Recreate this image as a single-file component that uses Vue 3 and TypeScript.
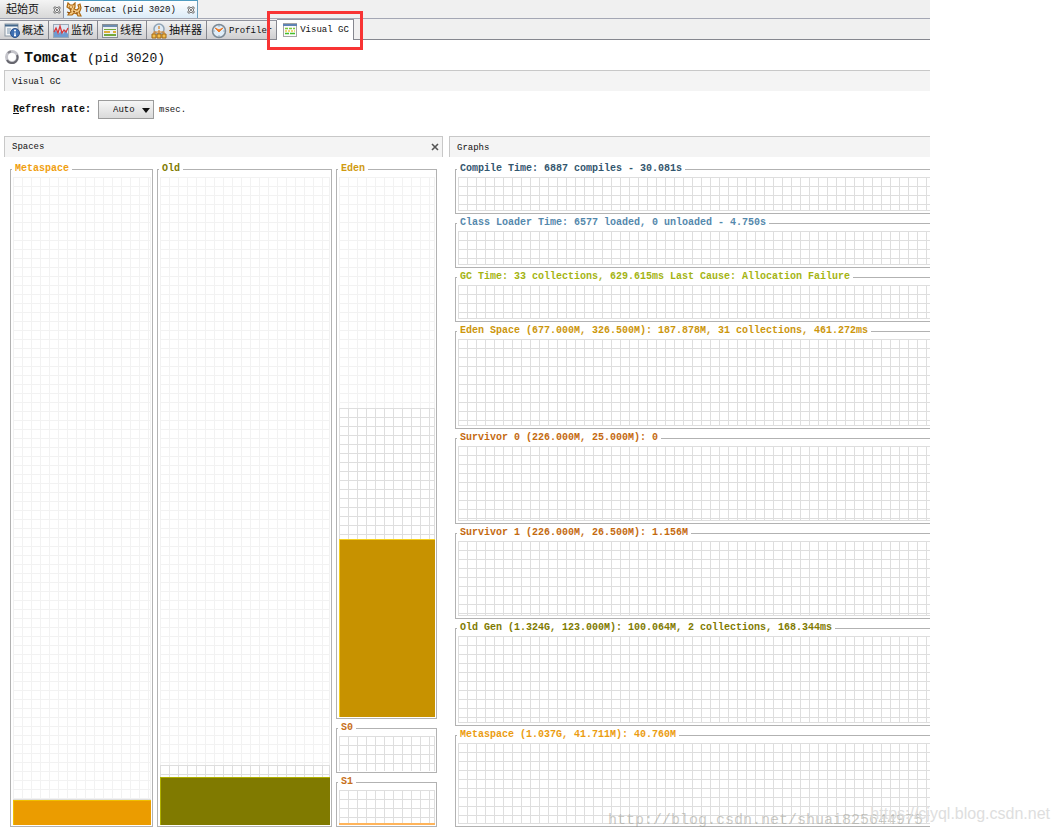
<script setup lang="ts">
interface Space {
  name: string
  color: string
  fill: string
  edge: string
  used: number
  committed: number
}

interface Graph {
  title: string
  color: string
  size: string
}

const metaspace: Space = { name: 'Metaspace', color: '#f0a010', fill: '#eb9c00', edge: '#f0c000', used: 3.7, committed: 3.8 }
const old: Space = { name: 'Old', color: '#807a00', fill: '#807a00', edge: '#b0b000', used: 7.3, committed: 9.1 }
const young: Space[] = [
  { name: 'Eden', color: '#d09a10', fill: '#c79200', edge: '#f5d020', used: 32.8, committed: 57.2 },
  { name: 'S0', color: '#c8701a', fill: '#ffb45a', edge: '#ffb45a', used: 0, committed: 100 },
  { name: 'S1', color: '#c8701a', fill: '#ffb45a', edge: '#ffb45a', used: 3, committed: 100 },
]
const columns: Space[][] = [[metaspace], [old], young]

const graphs: Graph[] = [
  { title: 'Compile Time: 6887 compiles - 30.081s', color: '#33566e', size: 'small' },
  { title: 'Class Loader Time: 6577 loaded, 0 unloaded - 4.750s', color: '#5488ac', size: 'small' },
  { title: 'GC Time: 33 collections, 629.615ms Last Cause: Allocation Failure', color: '#a4b412', size: 'small' },
  { title: 'Eden Space (677.000M, 326.500M): 187.878M, 31 collections, 461.272ms', color: '#cc960c', size: 'large' },
  { title: 'Survivor 0 (226.000M, 25.000M): 0', color: '#c46a10', size: 'medium' },
  { title: 'Survivor 1 (226.000M, 26.500M): 1.156M', color: '#c46a10', size: 'medium' },
  { title: 'Old Gen (1.324G, 123.000M): 100.064M, 2 collections, 168.344ms', color: '#807a00', size: 'large' },
  { title: 'Metaspace (1.037G, 41.711M): 40.760M', color: '#eb9c10', size: 'fill' },
]
</script>

<template>
  <main class="page">
    <nav class="docs" aria-label="Documents">
      <div class="doc">
        <button class="doc-name" type="button">起始页</button>
        <button class="x" type="button" aria-label="Close start page">
          <svg viewBox="0 0 8 8"><path d="M1 1h2l1 1 1-1h2v2L6 4l1 1v2H5L4 6 3 7H1V5l1-1-1-1z" fill="#eee" stroke="#777" /><path d="M2 2l4 4M6 2L2 6" stroke="#888" /></svg>
        </button>
      </div>
      <div class="doc current">
        <button class="doc-name" type="button">
          <svg class="icon" viewBox="0 0 16 16">
            <path d="M2 1l2 2h3l2-2v4l-1 2 3 1 2-2-1-3 2-1 1 4-1 3-1 1 2 4h-3l-1-2-3-1-2 2H2l1-2 2-1-1-3-3-2z" fill="#f6cd88" stroke="#b06a12" stroke-width="1.200" />
            <path d="M3 5h1M6 5h1M4 7h2M7 9l2 1M11 10v2M1 10l3 1" fill="none" stroke="#8a4a08" stroke-width="1.200" />
          </svg>
          Tomcat (pid 3020)
        </button>
        <button class="x" type="button" aria-label="Close Tomcat">
          <svg viewBox="0 0 8 8"><path d="M1 1h2l1 1 1-1h2v2L6 4l1 1v2H5L4 6 3 7H1V5l1-1-1-1z" fill="#eee" stroke="#777" /><path d="M2 2l4 4M6 2L2 6" stroke="#888" /></svg>
        </button>
      </div>
    </nav>

    <nav class="views" aria-label="Views">
      <button class="view" type="button">
        <svg class="icon" viewBox="0 0 16 16">
          <rect x="1" y="1" width="13" height="12" fill="#f4f6f8" stroke="#8b97a3" />
          <path d="M1 2.500h13" stroke="#45688c" stroke-width="2" />
          <path d="M3 6h4M3 8h3M3 10h3" stroke="#7f98b0" />
          <circle cx="11" cy="10" r="4.500" fill="#3d6fb4" stroke="#2a4f88" />
          <path d="M11 9.500v3M10 12.500h2" stroke="#fff" stroke-width="1.300" /><circle cx="11" cy="7.500" r="1" fill="#fff" />
        </svg>
        概述
      </button>
      <button class="view" type="button">
        <svg class="icon" viewBox="0 0 16 16">
          <rect x=".5" y="1.500" width="15" height="13" fill="#dce7f3" stroke="#9aa8b6" />
          <path d="M1 14V9l2-2 2 4 3-3 2 3 2-4 3 4v3z" fill="#6f9bd0" />
          <path d="M1 9l2-4 2 5 2-7 2 7 2-3 2 2 2-4" fill="none" stroke="#d8383a" stroke-width="1.300" />
        </svg>
        监视
      </button>
      <button class="view" type="button">
        <svg class="icon" viewBox="0 0 16 16">
          <rect x=".5" y="1.500" width="15" height="13" fill="#eef0f2" stroke="#888e94" />
          <path d="M1 3h14" stroke="#6d8db0" stroke-width="2" />
          <path d="M2 6.500h12" stroke="#74a93c" /><path d="M2 9h6M11 9h3" stroke="#e0ae38" stroke-width="2" /><path d="M2 12h12" stroke="#74a93c" stroke-width="2" />
        </svg>
        线程
      </button>
      <button class="view" type="button">
        <svg class="icon" viewBox="0 0 16 16">
          <circle cx="8" cy="6" r="5" fill="#dfeaf4" stroke="#8fa3b5" stroke-width="1.500" />
          <path d="M8 3v3M3 11V9h10v2M8 7v4" fill="none" stroke="#d9801d" stroke-width="1.200" />
          <path d="M1 11h4v4H1zM6 11h4v4H6zM11 11h4v4h-4z" fill="#f3be4c" stroke="#a36814" />
        </svg>
        抽样器
      </button>
      <button class="view" type="button">
        <svg class="icon" viewBox="0 0 16 16">
          <circle cx="8" cy="8" r="6.500" fill="#dfedf8" stroke="#7c8a96" stroke-width="1.500" />
          <path d="M8 2.500v1M8 12.500v1M2.500 8h1M12.500 8h1" stroke="#56728b" />
          <path d="M4 5l4 4 4-4-4 2z" fill="#ee7a28" stroke="#ee7a28" />
        </svg>
        Profiler
      </button>
      <button class="view active" type="button" aria-current="page">
        <svg class="icon" viewBox="0 0 16 16">
          <rect x="1.500" y="1.500" width="13" height="13" fill="#fbfbfb" stroke="#a5a5a5" />
          <path d="M1 3h14" stroke="#5f83b4" stroke-width="2" />
          <path d="M3 6.500h10" stroke="#7bc838" stroke-width="1.500" stroke-dasharray="3 1" /><path d="M3 9h10" stroke="#efc850" stroke-width="1.500" stroke-dasharray="2 1" /><path d="M3 11.500h4M8 11.500h5" stroke="#45bf28" stroke-width="1.500" />
        </svg>
        Visual GC
        <span class="mark"></span>
      </button>
    </nav>

    <h1 class="title">
      <svg class="ring" viewBox="0 0 16 16">
        <circle cx="8" cy="8" r="5.500" fill="none" stroke="#c4c4ca" stroke-width="3" />
        <path d="M3 11a5.500 5.500 0 0 0 10-5" fill="none" stroke="#66666e" stroke-width="2" />
        <path d="M4 4a5.500 5.500 0 0 1 3-1.500" fill="none" stroke="#85858c" stroke-width="2" />
      </svg>
      <b>Tomcat</b><span class="pid">(pid 3020)</span>
    </h1>

    <h2 class="bar">Visual GC</h2>

    <div class="rate">
      <label for="rate"><u>R</u>efresh rate:</label>
      <span class="pick">
        <select id="rate"><option>Auto</option></select>
        <svg class="arrow" viewBox="0 0 8 5"><path d="M0 0h8L4 5z" fill="#111" /></svg>
      </span>
      <span>msec.</span>
    </div>

    <div class="panels">
      <section class="panel">
        <h2 class="bar ends">
          Spaces
          <button class="x" type="button" aria-label="Close Spaces">
            <svg viewBox="0 0 8 8"><path d="M1 1l6 6M7 1L1 7" stroke="#555" stroke-width="1.600" /></svg>
          </button>
        </h2>
        <div class="spaces">
          <div v-for="(column, i) in columns" :key="i" class="column">
            <fieldset v-for="space in column" :key="space.name" class="box" :class="'box-' + space.name.toLowerCase()">
              <legend :style="{ color: space.color }">{{ space.name }}</legend>
              <div class="meter">
                <div class="free cells" :style="{ flexGrow: 100 - space.committed }"></div>
                <div class="committed cells" :style="{ flexGrow: space.committed - space.used }"></div>
                <div
                  v-if="space.used"
                  class="used"
                  :style="{ flexGrow: space.used, background: space.fill, borderColor: space.edge }"
                ></div>
              </div>
            </fieldset>
          </div>
        </div>
      </section>

      <section class="panel">
        <h2 class="bar">Graphs</h2>
        <div class="graphs">
          <fieldset v-for="graph in graphs" :key="graph.title" class="box open">
            <legend :style="{ color: graph.color }">{{ graph.title }}</legend>
            <div class="cells plot" :class="graph.size"></div>
          </fieldset>
        </div>
      </section>
    </div>

    <span class="stamp mono">http://blog.csdn.net/shuai825644975</span>
    <span class="stamp sans">https://cjyql.blog.csdn.net</span>
  </main>
</template>

<style>
body {
  margin: 0;
  background: #fff;
}
</style>

<style scoped>
.page {
  position: relative;
  padding-right: 129px;
  padding-bottom: 5px;
  overflow: hidden;
  color: #111;
  font: 9px/12px "Liberation Mono", "Noto Sans CJK SC", monospace;
}
button {
  padding: 0;
  border: 0;
  background: none;
  color: inherit;
  font: inherit;
}
.docs,
.views {
  display: flex;
  background: #f0f0f0;
}
.docs {
  height: 18px;
  border-bottom: 1px solid #a4a7b4;
}
.doc {
  display: flex;
  align-items: center;
  justify-content: space-between;
  box-sizing: border-box;
  width: 64px;
  padding: 1px 2px 0 6px;
  border-right: 1px solid #8e93a3;
  background: linear-gradient(#f4f4f4, #d8d8d8);
}
.doc-name {
  display: flex;
  align-items: center;
  gap: 2px;
  font-size: 11px;
  white-space: nowrap;
}
.current {
  width: 134px;
  padding: 0 2px;
  border-top: 1px solid #4f9cc0;
  border-right-color: #6d9fbd;
  background: linear-gradient(#fff, #dcecf8);
}
.current .doc-name {
  font-size: 9px;
}
.x {
  display: flex;
  width: 8px;
  height: 8px;
}
.x svg {
  width: 8px;
  height: 8px;
}
.icon {
  flex: none;
  width: 16px;
  height: 16px;
}
.views {
  align-items: flex-end;
  height: 20px;
  border-bottom: 1px solid #85878f;
}
.view {
  display: flex;
  align-items: center;
  gap: 2px;
  box-sizing: border-box;
  height: 19px;
  padding: 2px 4px 0;
  border-top: 1px solid #92949e;
  border-right: 1px solid #85878f;
  background: linear-gradient(#f2f2f2, #cfcfd1);
  font-size: 11px;
  white-space: nowrap;
}
.view:nth-child(5) {
  font-size: 9px;
}
.view.active {
  position: relative;
  height: 21px;
  margin-bottom: -1px;
  padding: 0 4px 1px 5px;
  background: #fff;
  font-size: 9px;
}
.mark {
  position: absolute;
  inset: -9px -10px -10px;
  border: 3px solid #f83434;
  pointer-events: none;
}
.title {
  display: flex;
  align-items: center;
  height: 30px;
  margin: 0;
  padding: 8px 0 0 4px;
  box-sizing: border-box;
  font-size: 15px;
  font-weight: 400;
}
.ring {
  width: 16px;
  height: 16px;
  margin: 0 4px 5px 0;
}
.pid {
  margin-left: 9px;
  font-size: 13px;
}
.bar {
  height: 20px;
  margin: 0;
  padding-left: 7px;
  border-top: 1px solid #c8c8c8;
  border-left: 1px solid #c8c8c8;
  background: #f4f4f4;
  font-size: 9px;
  font-weight: 400;
  line-height: 22px;
}
.page > .bar {
  margin-left: 4px;
}
.ends {
  display: flex;
  align-items: center;
  justify-content: space-between;
  padding-right: 3px;
  border-right: 1px solid #c8c8c8;
}
.rate {
  display: flex;
  align-items: center;
  gap: 5px;
  height: 45px;
  padding: 0 0 8px 13px;
  box-sizing: border-box;
}
.rate label {
  font-size: 10px;
  font-weight: 700;
}
.pick {
  display: flex;
  position: relative;
  margin-left: 2px;
}
.rate select {
  width: 56px;
  height: 19px;
  padding: 0 18px 0 14px;
  border: 1px solid #9b9b9b;
  border-radius: 0;
  background: linear-gradient(#f6f6f6, #dadada);
  color: inherit;
  font: inherit;
  appearance: none;
}
.arrow {
  position: absolute;
  top: 8px;
  right: 4px;
  width: 8px;
  height: 5px;
  pointer-events: none;
}
.panels {
  display: grid;
  grid-template-columns: 439fr 481fr;
  gap: 6px;
  padding-left: 4px;
}
.panel {
  display: flex;
  flex-direction: column;
  min-width: 0;
}
.spaces {
  display: grid;
  flex: 1;
  grid-template-columns: 143fr 175fr 101fr;
  gap: 4px;
  padding: 6px 6px 0;
}
.column,
.graphs {
  display: flex;
  flex-direction: column;
  gap: 3px;
  min-width: 0;
}
.graphs {
  padding: 6px 0 0 6px;
}
.box {
  display: flex;
  flex-direction: column;
  min-width: 0;
  margin: 0;
  padding: 2px;
  border: 1px solid #b2b2b2;
}
.column .box {
  flex: 1;
  padding: 2px 1px 1px 2px;
}
.column .box-s0,
.column .box-s1 {
  flex: none;
}
.open {
  padding-right: 0;
  border-right: 0;
}
legend {
  margin-left: -1px;
  padding: 0 3px;
  font-size: 10px;
  font-weight: 700;
  line-height: 12px;
  white-space: nowrap;
}
.column legend {
  margin-left: -1px;
}
.meter {
  display: flex;
  flex: 1;
  flex-direction: column;
  min-height: 35px;
}
.meter > div {
  flex-basis: 0;
  box-sizing: border-box;
}
.cells {
  --line: #dedede;
  background-image: linear-gradient(var(--line) 1px, transparent 1px), linear-gradient(90deg, var(--line) 1px, transparent 1px);
  background-size: 9px 9px;
}
.meter .cells {
  border-right: 1px solid var(--line);
}
.meter .free {
  --line: #f2f2f2;
}
.used {
  border: solid;
  border-width: 1px 0 0 1px;
}
.plot {
  box-sizing: border-box;
  border-bottom: 1px solid #dedede;
}
.small {
  height: 34px;
}
.medium {
  height: 75px;
}
.large {
  height: 87px;
}
.fill {
  height: 81px;
}
.stamp {
  position: absolute;
  white-space: nowrap;
}
.mono {
  right: 136px;
  bottom: 2px;
  color: rgba(150, 150, 140, 0.5);
  font-size: 15px;
  line-height: 18px;
}
.sans {
  right: 9px;
  bottom: 9px;
  color: #dedede;
  font: 16px/18px "Liberation Sans", Arial, sans-serif;
}
</style>
